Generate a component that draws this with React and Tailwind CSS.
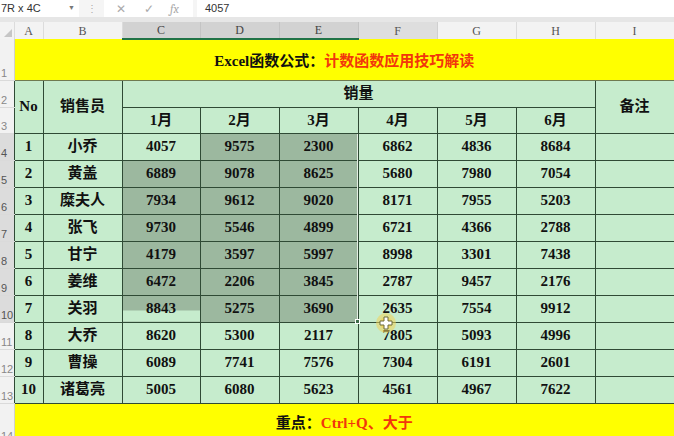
const rows = [
  [1, '小乔', 4057, 9575, 2300, 6862, 4836, 8684],
  [2, '黄盖', 6889, 9078, 8625, 5680, 7980, 7054],
  [3, '糜夫人', 7934, 9612, 9020, 8171, 7955, 5203],
  [4, '张飞', 9730, 5546, 4899, 6721, 4366, 2788],
  [5, '甘宁', 4179, 3597, 5997, 8998, 3301, 7438],
  [6, '姜维', 6472, 2206, 3845, 2787, 9457, 2176],
  [7, '关羽', 8843, 5275, 3690, 2635, 7554, 9912],
  [8, '大乔', 8620, 5300, 2117, 7805, 5093, 4996],
  [9, '曹操', 6089, 7741, 7576, 7304, 6191, 2601],
  [10, '诸葛亮', 5005, 6080, 5623, 4561, 4967, 7622],
];

const letters = ['A', 'B', 'C', 'D', 'E', 'F', 'G', 'H', 'I'];
const widths = ['w-[14px]', 'w-[29px]', 'w-[79px]', 'w-[78px]', 'w-[79px]', 'w-[79px]', 'w-[79px]', 'w-[79px]', 'w-[79px]', 'w-[79px]'];

const serif = { fontFamily: '"Liberation Serif", "Noto Sans CJK SC", serif' };

const cell = 'border border-[#2f4a35] text-center font-bold text-[15px] text-[#111] p-0';
const green = 'bg-[#c6eccd]';
const shaded = 'bg-[#9cb89f]';

function RowHead({ n, sel, dark }) {
  return (
    <td
      className={
        (sel ? 'bg-[#dcdcdc] text-[#555] ' : 'bg-[#f2f2f2] text-[#888] ') +
        (dark ? 'border-r border-r-[#2f4a35] ' : 'border-r border-r-[#d0d0d0] ') +
        'border-b border-b-[#dadada] align-bottom text-left pl-[1px] pb-[1px] text-[11px] leading-none p-0'
      }
      style={{ fontFamily: '"Liberation Sans", Arial, sans-serif' }}
    >
      {n}
    </td>
  );
}

function HeaderCell({ l }) {
  const sel = l === 'C' || l === 'D' || l === 'E';
  let cls = 'bg-[#f3f3f3] text-[#555] border-r border-r-[#dcdcdc]';
  if (sel) cls = 'bg-[#d2d2d2] text-[#444] border-r border-r-[#c4c4c4] border-b-2 border-b-[#217346]';
  if (l === 'F') cls = 'bg-[#dedede] text-[#555] border-r border-r-[#d0d0d0]';
  return <th className={cls + ' font-normal text-[12px] p-0 leading-none'}>{l}</th>;
}

function FormulaBar() {
  return (
    <div className="h-[22px] bg-[#e6e6e6] flex flex-col" style={{ fontFamily: '"Liberation Sans", Arial, sans-serif' }}>
      <div className="h-[17px] flex bg-[#f5f5f5]">
        <div className="w-[79px] bg-white flex items-center justify-between pl-[1px] pr-[4px] text-[11px] text-[#333]">
          <span>7R x 4C</span>
          <span className="text-[7px] text-[#777]">▼</span>
        </div>
        <div className="w-[25px] flex items-center justify-center text-[#aaa] text-[10px]">⋮</div>
        <div className="w-[89px] bg-white flex items-center text-[#aaa] text-[12px]">
          <span className="ml-[12px]">✕</span>
          <span className="ml-[18px]">✓</span>
          <span className="ml-[16px] italic font-serif text-[12px]">fx</span>
        </div>
        <div className="w-[4px]" />
        <div className="flex-1 bg-white flex items-center pl-[8px] text-[11px] text-[#333]">4057</div>
      </div>
    </div>
  );
}

function Cursor() {
  return (
    <svg className="absolute left-[375px] top-[312px]" width="22" height="22" viewBox="0 0 22 22">
      <circle cx="11" cy="11" r="10" fill="#f3d35a" opacity="0.55" />
      <circle cx="11" cy="11" r="6" fill="#f6d14a" opacity="0.6" />
      <path d="M9 5h4v4h4v4h-4v4h-4v-4h-4v-4h4z" fill="#fff" stroke="#6b6b3a" strokeWidth="1" />
    </svg>
  );
}

export default function App() {
  return (
    <div className="w-[674px] h-[436px] overflow-hidden bg-white relative">
      <FormulaBar />
      <table className="border-collapse table-fixed w-[674px]" style={serif}>
        <colgroup>
          {widths.slice(0, 10).map((w, i) => (
            <col key={i} className={w} />
          ))}
        </colgroup>
        <tbody>
          <tr className="h-[17px]">
            <th className="bg-[#f3f3f3] border-r border-r-[#dcdcdc] p-0 relative">
              <span className="absolute right-[2px] bottom-[2px] w-0 h-0 border-l-[8px] border-l-transparent border-b-[8px] border-b-[#c6c6c6]" />
            </th>
            {letters.map((l) => (
              <HeaderCell key={l} l={l} />
            ))}
          </tr>
          <tr className="h-[41px]">
            <RowHead n={1} />
            <td colSpan={9} className="bg-[#ffff00] border-b border-b-[#6f7a50] text-center font-bold text-[15px] p-0 pt-[2px]">
              <span className="text-[#111]">Excel函数公式：</span>
              <span className="text-[#f2360c]">计数函数应用技巧解读</span>
            </td>
          </tr>
          <tr className="h-[27px]">
            <RowHead n={2} dark />
            <td rowSpan={2} className={cell + ' ' + green}>No</td>
            <td rowSpan={2} className={cell + ' ' + green}>销售员</td>
            <td colSpan={6} className={cell + ' ' + green}>销量</td>
            <td rowSpan={2} className={cell + ' ' + green}>备注</td>
          </tr>
          <tr className="h-[26px]">
            <RowHead n={3} dark />
            {['1月', '2月', '3月', '4月', '5月', '6月'].map((m) => (
              <td key={m} className={cell + ' ' + green}>{m}</td>
            ))}
          </tr>
          {rows.map((r, ri) => {
            const sel = ri < 7;
            return (
              <tr key={ri} className="h-[27px]">
                <RowHead n={ri + 4} sel={sel} dark />
                {r.map((v, ci) => {
                  let bg = green;
                  if (sel && ci >= 2 && ci <= 4 && !(ri === 0 && ci === 2)) bg = shaded;
                  if (ri === 6 && ci === 2) bg = 'bg-[linear-gradient(to_bottom,#9cb89f_0,#9cb89f_15px,#c6eccd_15px)]';
                  return (
                    <td key={ci} className={cell + ' ' + bg}>
                      {v}
                    </td>
                  );
                })}
                <td className={cell + ' ' + green} />
              </tr>
            );
          })}
          <tr className="h-[40px]">
            <RowHead n={14} />
            <td colSpan={9} className="bg-[#ffff00] text-center font-bold text-[15px] p-0">
              <span className="text-[#111]">重点：</span>
              <span className="text-[#f2360c]">Ctrl+Q、大于</span>
            </td>
          </tr>
        </tbody>
      </table>
      <div className="absolute left-[357px] top-[134px] w-[1px] h-[187px] bg-[#e4eee4]" />
      <div className="absolute left-[355px] top-[319px] w-[5px] h-[5px] bg-[#3f6e4a] border border-white" />
      <Cursor />
    </div>
  );
}
